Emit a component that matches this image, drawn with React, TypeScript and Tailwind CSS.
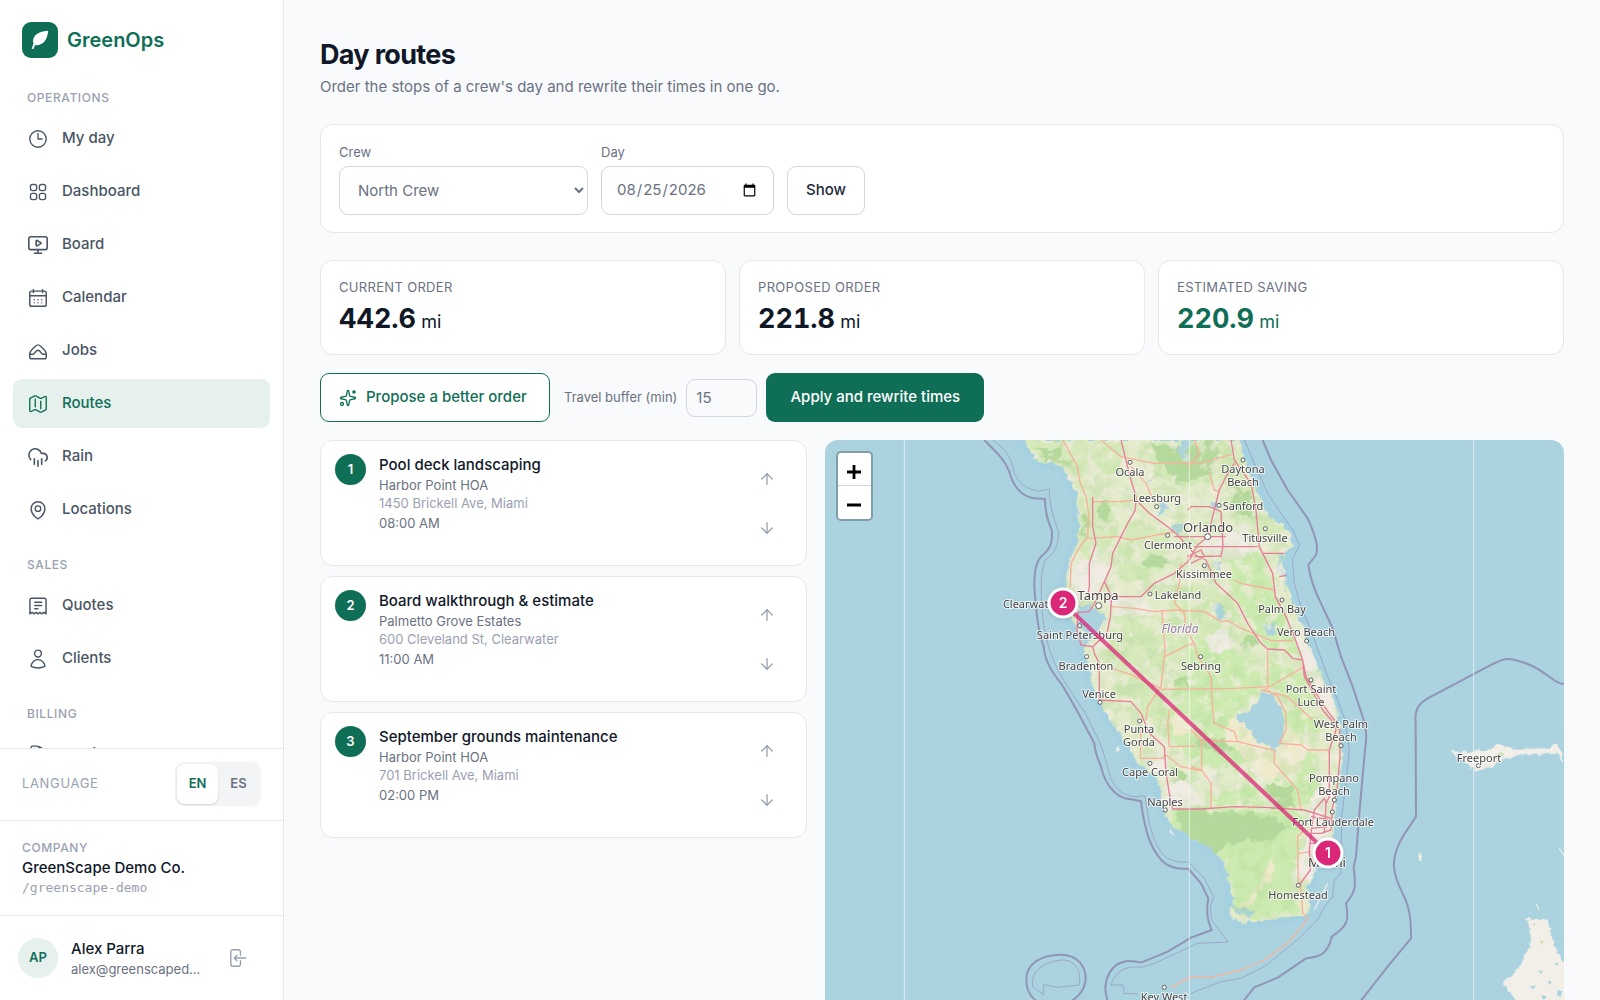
import type { ReactNode } from 'react'
import { ArrowDown, ArrowUp, CloudRain, MonitorPlay, Sparkles } from 'lucide-react'
import {
  HiOutlineArrowLeftOnRectangle,
  HiOutlineClock,
  HiOutlineDocumentText,
  HiOutlineMap,
  HiOutlineMapPin,
  HiOutlineSquares2X2,
  HiOutlineUser,
} from 'react-icons/hi2'

const iconClass = 'h-[22px] w-[22px] shrink-0'

function StrokeIcon({ children }: { children: ReactNode }) {
  return (
    <svg
      viewBox="0 0 24 24"
      fill="none"
      stroke="currentColor"
      strokeWidth="1.6"
      strokeLinecap="round"
      strokeLinejoin="round"
      className={iconClass}
      aria-hidden="true"
    >
      {children}
    </svg>
  )
}

function CalendarIcon() {
  return (
    <StrokeIcon>
      <rect x="3" y="4.5" width="18" height="16.5" rx="2" />
      <path d="M3 9.5h18M7 3v3M17 3v3" />
      <path d="M8 14h.01M12 14h.01M16 14h.01M8 17.3h.01M12 17.3h.01M16 17.3h.01" />
    </StrokeIcon>
  )
}

function JobsIcon() {
  return (
    <StrokeIcon>
      <path d="M3 15.500c0-3.800 3.200-6 5.800-8.400C10 6 10.900 5.300 12 5.300s2 .7 3.200 1.800C17.800 9.500 21 11.700 21 15.500v3a2 2 0 0 1-2 2H5a2 2 0 0 1-2-2Z" />
      <path d="M3 15.500h3.700c2.300 0 2.400-4.300 5.300-4.300s3 4.300 5.300 4.300H21" />
    </StrokeIcon>
  )
}

function QuoteIcon() {
  return (
    <StrokeIcon>
      <path d="M3.200 20.500V5.200a1.700 1.700 0 0 1 1.700-1.700h14.200a1.700 1.700 0 0 1 1.700 1.700v15.300L18.300 19l-2.100 1.500-2.100-1.500-2.100 1.500L9.900 19l-2.100 1.500L5.700 19Z" />
      <path d="M8.500 8H16M8.500 11.500H16M8.500 15H12" />
    </StrokeIcon>
  )
}

type NavItem = { label: string; icon: ReactNode; active?: boolean }

const sections: { title: string; items: NavItem[] }[] = [
  {
    title: 'Operations',
    items: [
      { label: 'My day', icon: <HiOutlineClock className={iconClass} /> },
      { label: 'Dashboard', icon: <HiOutlineSquares2X2 className={iconClass} /> },
      { label: 'Board', icon: <MonitorPlay strokeWidth={1.75} className={iconClass} /> },
      { label: 'Calendar', icon: <CalendarIcon /> },
      { label: 'Jobs', icon: <JobsIcon /> },
      { label: 'Routes', icon: <HiOutlineMap className={iconClass} />, active: true },
      { label: 'Rain', icon: <CloudRain strokeWidth={1.75} className={iconClass} /> },
      { label: 'Locations', icon: <HiOutlineMapPin className={iconClass} /> },
    ],
  },
  {
    title: 'Sales',
    items: [
      { label: 'Quotes', icon: <QuoteIcon /> },
      { label: 'Clients', icon: <HiOutlineUser className={iconClass} /> },
    ],
  },
  {
    title: 'Billing',
    items: [{ label: 'Invoices', icon: <HiOutlineDocumentText className={iconClass} /> }],
  },
]

function Sidebar() {
  return (
    <aside className="flex h-screen w-[284px] shrink-0 flex-col border-r border-gray-200 bg-white">
      <a href="#home" className="flex items-center gap-[9px] px-[22px] pt-[22px] pb-4">
        <svg viewBox="0 0 36 36" className="h-9 w-9" aria-hidden="true">
          <rect width="36" height="36" rx="9" fill="#0f6e56" />
          <path
            d="M26.200 8.800C20.500 9 15 11 12.500 14.500c-1.600 2.300-1.700 4.800-1 7L9.600 27h1.800l1.500-3.800c4.200.4 7.800-1.200 10.100-4.400C25 16 25.900 12.500 26.200 8.800Z"
            fill="#fff"
          />
        </svg>
        <span className="text-xl font-semibold text-[#0f6e56]">GreenOps</span>
      </a>

      <nav className="min-h-0 flex-1 overflow-hidden px-[13px]">
        {sections.map((section) => (
          <div key={section.title} className="pt-[14px] pb-[9px] first:pt-4">
            <h2 className="mb-2 px-[14px] text-[12px] leading-4 font-medium tracking-wider text-gray-400 uppercase">
              {section.title}
            </h2>
            <ul className="flex flex-col gap-1">
              {section.items.map((item) => (
                <li key={item.label}>
                  <a
                    href={`#${item.label.toLowerCase().replace(' ', '-')}`}
                    aria-current={item.active ? 'page' : undefined}
                    className={
                      item.active
                        ? 'flex h-[49px] items-center gap-[13px] rounded-[9px] bg-[#e6f1ee] px-[14px] text-[15px] font-medium text-[#0f6e56]'
                        : 'flex h-[49px] items-center gap-[13px] rounded-[9px] px-[14px] text-[15px] font-medium text-gray-600'
                    }
                  >
                    {item.icon}
                    {item.label}
                  </a>
                </li>
              ))}
            </ul>
          </div>
        ))}
      </nav>

      <div className="flex items-center justify-between border-t border-gray-200 px-[22px] pt-[13px] pb-[14px]">
        <span className="text-[13px] tracking-wider text-gray-400 uppercase">Language</span>
        <div className="flex rounded-[9px] bg-gray-100 p-[2px]">
          <button
            type="button"
            aria-pressed="true"
            className="h-10 w-[41px] rounded-[8px] bg-white text-[13px] font-semibold text-[#0f6e56] shadow-sm"
          >
            EN
          </button>
          <button
            type="button"
            aria-pressed="false"
            className="h-10 w-[41px] rounded-[8px] text-[13px] font-semibold text-gray-500"
          >
            ES
          </button>
        </div>
      </div>

      <div className="border-t border-gray-200 px-[22px] py-[18px]">
        <p className="text-[12px] leading-[18px] font-medium tracking-wider text-gray-400 uppercase">Company</p>
        <p className="text-[15px] leading-[22px] font-medium text-gray-900">GreenScape Demo Co.</p>
        <p className="font-['DejaVu_Sans_Mono',monospace] text-[13px] leading-[18px] text-gray-400">
          /greenscape-demo
        </p>
      </div>

      <div className="flex items-center gap-[13px] border-t border-gray-200 py-[22px] pr-[35px] pl-[18px]">
        <span className="flex h-10 w-10 shrink-0 items-center justify-center rounded-full bg-[#e6f1ee] text-[13px] font-semibold text-[#0f6e56]">
          AP
        </span>
        <div className="w-[132px]">
          <p className="text-[15px] leading-[22px] font-medium text-gray-900">Alex Parra</p>
          <p className="truncate text-[13px] leading-[18px] text-gray-500">alex@greenscapedemo.com</p>
        </div>
        <button type="button" aria-label="Sign out" className="ml-auto text-gray-400">
          <HiOutlineArrowLeftOnRectangle className={iconClass} />
        </button>
      </div>
    </aside>
  )
}

const stats = [
  { label: 'Current order', value: '442.6', color: 'text-gray-900' },
  { label: 'Proposed order', value: '221.8', color: 'text-gray-900' },
  { label: 'Estimated saving', value: '220.9', color: 'text-[#0f6e56]' },
]

const stops = [
  { title: 'Pool deck landscaping', client: 'Harbor Point HOA', address: '1450 Brickell Ave, Miami', time: '08:00 AM' },
  {
    title: 'Board walkthrough & estimate',
    client: 'Palmetto Grove Estates',
    address: '600 Cleveland St, Clearwater',
    time: '11:00 AM',
  },
  {
    title: 'September grounds maintenance',
    client: 'Harbor Point HOA',
    address: '701 Brickell Ave, Miami',
    time: '02:00 PM',
  },
]

function StopCard({ stop, index }: { stop: (typeof stops)[number]; index: number }) {
  return (
    <li className="flex items-start gap-[13px] rounded-[13px] border border-gray-200 bg-white px-[14px] py-[13px]">
      <span className="flex h-[31px] w-[31px] shrink-0 items-center justify-center rounded-full bg-[#0f6e56] text-[13px] font-semibold text-white">
        {index + 1}
      </span>
      <div className="min-w-0 flex-1 text-[13px] leading-[18px]">
        <h3 className="text-[15px] leading-[22px] font-medium text-gray-900">{stop.title}</h3>
        <p className="text-gray-500">{stop.client}</p>
        <p className="text-gray-400">{stop.address}</p>
        <p className="mt-[2px] text-gray-500">{stop.time}</p>
      </div>
      <div className="flex flex-col text-gray-400">
        <button
          type="button"
          aria-label={`Move ${stop.title} up`}
          className="flex h-[49px] w-[49px] items-center justify-center"
        >
          <ArrowUp size={18} strokeWidth={1.75} />
        </button>
        <button
          type="button"
          aria-label={`Move ${stop.title} down`}
          className="flex h-[49px] w-[49px] items-center justify-center"
        >
          <ArrowDown size={18} strokeWidth={1.75} />
        </button>
      </div>
    </li>
  )
}

// Geography is drawn on a grid three times finer than the labels.
const land =
  'M608 30 630 70 655 95 690 100 725 110 745 150 765 190 772 240 775 290 770 330 755 370 742 410 735 440 738 470 745 500 750 560 765 590 780 610 790 640 785 655 800 700 810 750 830 800 850 840 870 870 890 900 925 945 945 1000 975 1020 1005 1040 1018 1070 1022 1110 1035 1160 1060 1190 1100 1215 1140 1240 1185 1270 1210 1300 1220 1340 1230 1380 1240 1410 1226 1440 1235 1465 1260 1480 1310 1472 1360 1465 1410 1460 1450 1455 1470 1440 1465 1400 1460 1370 1475 1340 1485 1310 1515 1290 1535 1260 1538 1200 1545 1120 1555 1060 1562 1000 1562 950 1557 890 1550 850 1535 800 1510 750 1485 695 1460 640 1445 590 1430 550 1410 500 1392 450 1385 400 1390 370 1412 350 1405 310 1380 280 1345 260 1330 235 1312 190 1290 140 1272 90 1255 30Z'

const areas: { fill: string; paths: string[] }[] = [
  {
    fill: '#d6e9ba',
    paths: [
      'M612 30 800 30 800 110 780 200 770 150 740 105 660 92Z',
      'M830 30 905 30 900 110 850 130 820 90Z',
      'M960 30 1230 30 1235 130 1170 160 1090 170 1000 130Z',
      'M780 210 860 200 900 260 870 350 800 400 775 330Z',
      'M930 270 1030 300 1060 400 990 450 890 450 890 350Z',
      'M1200 130 1290 160 1320 260 1380 290 1390 330 1250 290 1210 220Z',
      'M880 550 1030 560 1030 700 960 780 880 720 860 620Z',
      'M1060 440 1200 470 1280 590 1310 700 1300 780 1200 790 1060 740 1030 600Z',
      'M870 720 1100 800 1110 960 1040 940 980 870 900 830Z',
      'M1230 40 1280 60 1310 180 1280 170 1240 110Z',
    ],
  },
  {
    fill: '#cdebb0',
    paths: [
      'M1215 390 1300 380 1350 440 1360 500 1400 570 1430 650 1420 680 1340 655 1290 580 1240 500Z',
      'M1120 620 1220 650 1320 720 1320 780 1210 850 1130 850 1060 780Z',
      'M1040 840 1180 800 1260 860 1330 960 1230 1020 1130 1000 1050 930Z',
      'M1370 850 1440 830 1500 870 1500 910 1430 910Z',
      'M1440 970 1490 960 1490 1070 1450 1130 1390 1120 1370 1030 1440 1030Z',
      'M1160 1090 1300 1080 1340 1120 1200 1130Z',
      'M1340 690 1440 720 1500 830 1430 830 1380 790 1340 760Z',
      'M1050 1140 1160 1138 1440 1140 1440 1210 1425 1300 1410 1370 1430 1440 1300 1465 1240 1450 1230 1380 1210 1290 1130 1235 1060 1185Z',
    ],
  },
  {
    fill: '#b5d99c',
    paths: [
      'M990 40 1100 50 1180 30 1200 120 1120 140 1070 170 1030 120Z',
      'M640 50 700 60 760 100 730 105 660 90Z',
      'M830 225 860 220 865 280 830 290Z',
      'M778 240 798 250 795 330 778 320Z',
      'M960 380 1020 375 1050 400 1000 425Z',
      'M1230 180 1290 180 1300 270 1240 260Z',
      'M1330 1075 1410 1075 1440 1135 1350 1130Z',
      'M1060 1140 1200 1145 1370 1160 1400 1190 1330 1240 1240 1240 1180 1270 1090 1210Z',
      'M1065 750 1100 745 1105 775 1065 775Z',
      'M1130 930 1210 930 1240 960 1180 985Z',
      'M1060 1010 1100 1030 1090 1080 1050 1070Z',
      'M1270 600 1310 615 1300 650 1260 640Z',
    ],
  },
  {
    fill: '#eeeacb',
    paths: [
      'M1250 850 1370 930 1370 880 1470 940 1440 980 1430 1030 1365 1040 1330 1040 1210 920Z',
      'M1050 860 1110 850 1120 900 1060 920Z',
      'M1340 1290 1365 1270 1360 1330 1320 1390 1280 1440 1260 1430 1320 1350Z',
    ],
  },
  {
    fill: '#f0ece4',
    paths: [
      'M1165 600 1210 595 1230 630 1215 665 1180 660 1162 635Z',
      'M1160 310 1290 300 1310 350 1290 380 1180 385 1140 350Z',
      'M770 400 830 370 860 420 830 500 760 500 745 440Z',
      'M1150 1020 1190 1015 1190 1060 1150 1060Z',
      'M1500 1040 1545 1040 1530 1260 1480 1310 1430 1370 1420 1290 1460 1240 1460 1130Z',
      'M1025 1060 1130 1060 1130 1130 1040 1150Z',
      'M850 500 960 500 1000 550 880 560Z',
      'M960 1000 1030 950 1040 1050Z',
      'M1420 600 1450 610 1490 720 1550 860 1510 840 1450 720Z',
    ],
  },
  {
    fill: '#aad3df',
    paths: [
      'M1320 782 1350 790 1375 820 1392 860 1390 890 1380 930 1362 955 1335 945 1300 930 1290 900 1270 885 1250 862 1285 845 1310 810Z',
      'M772 530 805 522 830 545 852 550 850 575 835 590 830 610 812 625 795 645 775 635 790 600 775 575Z',
      'M1070 40 1100 40 1110 90 1085 85Z',
      'M1010 220 1040 230 1030 250 1010 245Z',
      'M1060 280 1090 285 1080 310 1055 300Z',
      'M1175 520 1200 515 1220 560 1200 575 1180 550Z',
      'M1175 390 1200 395 1195 420 1178 415Z',
      'M1335 575 1360 575 1355 620 1335 605Z',
      'M1365 360 1390 370 1385 440 1400 500 1375 430Z',
      'M1180 210 1200 215 1195 240 1180 235Z',
      'M1225 1410 1260 1430 1300 1440 1290 1465 1250 1450Z',
      'M985 145 995 145 995 160 980 160Z',
    ],
  },
]

const highways = [
  'M900 30 912 80 930 150 945 200 943 240 920 280 900 320 875 370 870 410 850 455 872 500 868 560 858 610 815 650 820 670 835 700 835 810 930 815 960 850 968 870 985 910 1030 950 1035 1030 1050 1120 1055 1137 1140 1137 1240 1130 1330 1132 1450 1140 1530 1165',
  'M945 210 985 250 1040 290 1070 315 1100 350 1130 380 1155 390 1185 460 1250 520 1280 580 1320 640 1340 657 1390 660 1415 685 1445 690 1455 740 1510 830 1540 870 1545 900 1525 960 1525 1100 1515 1120',
  'M1230 30 1240 90 1290 160 1305 240 1315 350 1355 430 1363 500 1395 560 1420 620 1445 690 1450 740 1505 840 1556 900 1557 980 1548 1080 1535 1130 1530 1200 1500 1210 1470 1210 1465 1260 1468 1320 1435 1365',
  'M872 500 960 500 1000 460 1060 430 1100 395 1130 345 1160 320 1180 240 1195 180 1215 140 1240 100',
  'M815 200 815 290 825 340 805 400 805 470 800 500M833 500 805 545 770 548 768 600 780 645 815 650M850 455 830 500',
  'M1060 320 1215 320M1120 350 1310 350M1325 370 1390 370M1375 440 1397 436M1110 230 1165 230 1200 245 1206 350 1200 378 1120 380M1100 240 1110 230',
  'M1100 395 1115 375M1098 380 1140 360 1150 380 1110 400',
  'M1470 1210 1480 1140 1510 1105 1515 1120 1510 1210M1465 1240 1500 1240M1470 1160 1530 1170M1472 1195 1520 1190',
]

const roads = [
  'M725 30 770 110 775 150 795 200 803 250 800 320 770 360 750 400 748 470',
  'M800 325 890 320 930 330 1060 305M840 30 900 80 1000 100 1140 100 1232 73M815 215 900 215 940 210',
  'M872 530 940 535 1000 545 1060 540 1150 545 1200 575 1220 572 1250 590 1320 620 1350 632 1415 632',
  'M1023 540 1032 660 1020 770 980 830 975 870M1020 778 1240 775 1340 770 1340 660',
  'M868 715 920 730 1020 775M1032 680 1090 650 1120 640M1080 400 1075 460 1060 520 1090 550 1095 600 1120 640 1130 680 1170 740 1175 840 1180 880 1240 905 1250 935',
  'M1240 450 1260 460 1360 480M1330 780 1380 750 1450 710M1320 780 1400 800 1475 870M1340 780 1370 800 1395 850 1395 900 1375 940 1440 945 1460 960 1525 960',
  'M1360 960 1360 1000 1430 1080 1440 1140M1110 900 1140 930 1250 935 1360 962M1142 930 1142 1020 1170 1060 1170 1137',
  'M1045 840 1040 880 1045 950 1125 948M960 900 958 985 1025 985 1035 975 1080 1010 1140 1022M1140 1020 1110 1010',
  'M1432 1366 1430 1220 1450 1200M1432 1270 1470 1265M1440 1370 1445 1450 1462 1465 1400 1540 1330 1590 1260 1620 1180 1640 1110 1640 1050 1672',
  'M1120 30 1135 70 1100 110M1165 130 1180 180 1195 185M930 110 975 160 1000 220',
]

const boundaries = [
  'M490 30C520 62 550 85 565 125 575 165 600 200 640 205L672 207C672 250 682 275 692 300 697 340 685 360 660 380 640 405 640 440 640 470 645 540 650 600 668 650 672 700 700 735 720 760 745 800 760 830 770 845L820 940C822 970 832 990 840 1010 855 1080 900 1108 930 1108L960 1114C965 1160 975 1200 985 1230 1015 1300 1045 1320 1102 1316L1140 1360 1162 1405C1155 1440 1158 1470 1172 1500L1110 1523 1040 1565 960 1598C900 1580 860 1610 853 1670 852 1700 865 1730 875 1740',
  'M1325 30 1350 90 1400 180 1460 265C1480 310 1495 350 1485 375L1462 405C1468 450 1480 480 1500 520L1535 595 1560 680 1595 770 1625 860C1640 900 1636 930 1632 960L1615 1150 1605 1280 1598 1310C1605 1370 1605 1385 1575 1420 1585 1470 1580 1490 1532 1520 1520 1580 1485 1582 1455 1585L1370 1643 1300 1672 1270 1710 1230 1740',
  'M2236 762C2200 765 2180 725 2120 702 2060 680 2050 683 2010 705L1830 800C1790 820 1780 840 1784 880L1785 1160 1745 1220C1705 1290 1715 1330 1745 1390 1770 1440 1770 1480 1770 1525L1700 1610 1590 1750',
  'M616 1650C616 1600 660 1574 720 1574 770 1574 794 1610 794 1645 794 1690 750 1725 700 1730 650 1725 616 1700 616 1650Z',
]

const innerBoundaries = [
  'M515 30C560 60 570 90 575 110 585 160 620 180 655 183L685 178C685 230 700 270 713 305 712 350 700 370 675 388 655 420 660 500 665 560 675 640 690 690 740 770L790 845 838 940 860 1010C870 1070 900 1095 940 1100L972 1098 985 1180C1010 1270 1030 1300 1102 1296L1150 1345 1178 1400 1168 1430 1172 1470 1221 1536 1130 1540 1000 1600 960 1612C910 1605 880 1630 870 1665L905 1665 910 1690 950 1692',
  'M1270 30 1300 100 1340 190 1380 250 1415 300 1436 345 1414 390 1420 460 1440 530 1470 600 1495 670 1520 740 1550 810 1572 870 1585 960 1575 1060 1562 1160 1560 1330 1540 1350 1535 1400 1510 1430 1490 1470 1440 1520 1380 1570 1330 1610 1260 1645 1200 1655 1110 1690',
  'M668 1695 635 1670C625 1620 680 1590 730 1590 770 1595 780 1630 775 1665L710 1672 668 1664Z',
]

const islands = [
  'M1885 955 1915 968 2005 960 2030 943 2070 958 2110 958 2190 952 2210 935 2216 958 2232 995 2205 972 2110 975 2050 985 2010 1010 1970 1024 1940 1005 1900 970Z',
  'M2115 1463 2150 1470 2180 1468 2190 1520 2210 1570 2236 1600 2236 1730 2100 1730 2045 1660 2095 1615 2110 1580 2135 1530 2125 1490Z',
  'M890 945 895 960 888 965ZM1045 1195 1058 1215 1050 1215ZM1798 1270 1808 1275 1800 1290 1790 1288Z',
]

const towns = [
  [927, 97], [1007, 230], [1040, 316], [1150, 407], [987, 492], [776, 587], [797, 680], [837, 817], [1139, 680],
  [1266, 90], [1194, 226], [1333, 296], [1383, 510], [1457, 633], [1470, 750], [1560, 947], [956, 873],
  [987, 1000], [1033, 1140], [1540, 1110], [1534, 1146], [1432, 1366], [1972, 1007], [1030, 1672],
]

const labels: [string, number, number][] = [
  ['Ocala', 305, 36], ['Leesburg', 332, 62], ['Clermont', 343, 109], ['Kissimmee', 379, 138],
  ['Lakeland', 353, 159], ['Clearwater', 206, 168], ['Saint Petersburg', 255, 199], ['Bradenton', 261, 230],
  ['Venice', 274, 258], ['Sebring', 376, 230], ['Daytona', 418, 33], ['Beach', 418, 46], ['Sanford', 418, 70],
  ['Titusville', 440, 102], ['Palm Bay', 457, 173], ['Vero Beach', 481, 196], ['Port Saint', 486, 253],
  ['Lucie', 486, 266], ['West Palm', 516, 288], ['Beach', 516, 301], ['Punta', 314, 293], ['Gorda', 314, 306],
  ['Cape Coral', 325, 336], ['Naples', 340, 366], ['Pompano', 509, 342], ['Beach', 509, 355],
  ['Fort Lauderdale', 508, 386], ['Homestead', 473, 459], ['Freeport', 654, 322], ['Key West', 339, 561],
]

const cities: [string, number, number][] = [
  ['Orlando', 383, 92],
  ['Tampa', 273, 160],
  ['Miami', 502, 427],
]

const pins = [
  { label: '2', x: 238, y: 163 },
  { label: '1', x: 503, y: 413 },
]

function RouteMap() {
  return (
    <section
      aria-label="Route map"
      className="relative col-span-3 h-[578px] overflow-hidden rounded-[13px] bg-[#aad3df]"
    >
      <svg
        viewBox="0 0 740 578"
        preserveAspectRatio="xMinYMin slice"
        className="h-full w-full font-['Noto_Sans',sans-serif]"
        aria-hidden="true"
      >
        <defs>
          <clipPath id="shore">
            <path d={land} />
          </clipPath>
          <filter id="rough" x="0" y="0" width="100%" height="100%" colorInterpolationFilters="sRGB">
            <feTurbulence type="fractalNoise" baseFrequency="0.02" numOctaves="3" seed="4" result="noise" />
            <feDisplacementMap in="SourceGraphic" in2="noise" scale="50" xChannelSelector="R" yChannelSelector="G" />
          </filter>
          <filter id="coast" x="0" y="0" width="100%" height="100%" colorInterpolationFilters="sRGB">
            <feTurbulence type="fractalNoise" baseFrequency="0.05" numOctaves="2" seed="7" result="noise" />
            <feDisplacementMap in="SourceGraphic" in2="noise" scale="20" xChannelSelector="R" yChannelSelector="G" />
          </filter>
          <filter id="speckle" x="0" y="0" width="100%" height="100%" colorInterpolationFilters="sRGB">
            <feTurbulence type="fractalNoise" baseFrequency="0.02" numOctaves="4" seed="9" />
            <feColorMatrix values="0 0 0 0 .7  0 0 0 0 .86  0 0 0 0 .6  0 5 0 0 -2.4" />
          </filter>
          <filter id="fields" x="0" y="0" width="100%" height="100%" colorInterpolationFilters="sRGB">
            <feTurbulence type="fractalNoise" baseFrequency="0.03" numOctaves="3" seed="23" />
            <feColorMatrix values="0 0 0 0 .95  0 0 0 0 .93  0 0 0 0 .88  7 0 0 0 -3.8" />
          </filter>
        </defs>
        <g transform="translate(-4 -10) scale(.33333)" fill="none" strokeLinejoin="round">
          <path d={land} fill="none" stroke="#9fcfe2" strokeWidth="40" opacity=".35" />
          <g filter="url(#coast)">
            <path d={land} fill="#e3ebcb" />
            <g clipPath="url(#shore)">
              <g filter="url(#rough)">
                {areas.map((area) => (
                  <path key={area.fill} d={area.paths.join('')} fill={area.fill} />
                ))}
              </g>
              <rect x="600" y="20" width="1000" height="1500" filter="url(#speckle)" opacity=".35" />
              <rect x="600" y="20" width="1000" height="1110" filter="url(#fields)" opacity=".6" />
              <path d={areas[5].paths[0] + areas[5].paths[1]} fill="#aad3df" />
            </g>
            {islands.map((d) => (
              <path key={d} d={d} fill="#f2efe9" />
            ))}
          </g>
          <path d="M2010 985 2040 965 2050 975 2020 990ZM2155 1530l12 4-4 10ZM2135 1480l8 2-4 6Z" fill="#c8dfb0" />
          <path
            d="M2150 1620l14 4-4 8ZM2180 1650l12 6-6 10ZM2125 1670l20-4-8 12ZM2160 1695l18 4-10 12ZM2200 1600l12-2-4 10ZM2210 1680l14 4-6 18-10-8Z"
            fill="#aad3df"
          />
          <path d="M1480 1440 1500 1400 1520 1360M2145 1420 2155 1440M2215 1255 2235 1285" stroke="#e8ece6" strokeWidth="4" />
          <path d={roads.join('')} stroke="#f8b19b" strokeWidth="4" />
          <path d={highways.join('')} stroke="#e77f97" strokeWidth="4" />
          <path d={innerBoundaries.join('')} stroke="#8a7fae" strokeWidth="3" opacity=".5" />
          <path d={boundaries.join('')} stroke="#8a7fa8" strokeWidth="6" opacity=".75" />
          <path d="M250 30V1770M1105 30V1770M1958 30V1770" stroke="#fff" strokeWidth="3" opacity=".6" />
          <g fill="#fff" stroke="#5c5c5c" strokeWidth="3">
            {towns.map(([x, y]) => (
              <circle key={`${x}-${y}`} cx={x} cy={y} r="6" />
            ))}
            <circle cx="1160" cy="320" r="9" />
            <circle cx="833" cy="527" r="9" />
          </g>
        </g>
        <g textAnchor="middle" fill="#444" stroke="#fff" strokeOpacity=".75" strokeWidth="2" strokeLinejoin="round" paintOrder="stroke">
          <g fontSize="11">
            {labels.map(([name, x, y]) => (
              <text key={`${name}-${x}`} x={x} y={y}>
                {name}
              </text>
            ))}
            <text x="355" y="193" fill="#9a7aa8" fontSize="12" fontStyle="italic">
              Florida
            </text>
          </g>
          <g fontSize="13">
            {cities.map(([name, x, y]) => (
              <text key={name} x={x} y={y}>
                {name}
              </text>
            ))}
          </g>
        </g>
        <path d="M238 163 503 413" stroke="#db2777" strokeWidth="4" strokeLinecap="round" opacity=".75" />
        {pins.map((pin) => (
          <g key={pin.label} textAnchor="middle" className="drop-shadow">
            <circle cx={pin.x} cy={pin.y} r="14" fill="#db2777" stroke="#fff" strokeWidth="3" />
            <text x={pin.x} y={pin.y + 5} fill="#fff" fontSize="14" fontWeight="600" className="font-['Inter',sans-serif]">
              {pin.label}
            </text>
          </g>
        ))}
      </svg>

      <div className="absolute top-[11px] left-[11px] flex flex-col rounded-[5px] border-2 border-black/25 bg-clip-padding">
        <button type="button" aria-label="Zoom in" className="flex h-[33px] w-[33px] items-center justify-center rounded-t-[3px] border-b border-gray-300 bg-white pt-[5px]">
          <svg viewBox="0 0 16 16" className="h-4 w-4" aria-hidden="true">
            <path d="M8 1v14M1 8h14" stroke="#000" strokeWidth="2.800" />
          </svg>
        </button>
        <button type="button" aria-label="Zoom out" className="flex h-[33px] w-[33px] items-center justify-center rounded-b-[3px] bg-white pt-[5px]">
          <svg viewBox="0 0 16 16" className="h-4 w-4" aria-hidden="true">
            <path d="M1 8h14" stroke="#000" strokeWidth="2.800" />
          </svg>
        </button>
      </div>
    </section>
  )
}

export default function App() {
  return (
    <div className="flex h-screen overflow-hidden bg-[#f9fafc] font-['Inter',sans-serif] text-gray-900">
      <Sidebar />
      <main className="min-w-0 flex-1 overflow-hidden px-9 pt-[37px]">
        <h1 className="text-[27px] leading-9 font-bold tracking-tight">Day routes</h1>
        <p className="mt-[2px] text-[15px] leading-6 text-gray-500">
          Order the stops of a crew's day and rewrite their times in one go.
        </p>

        <form
          className="mt-[25px] flex items-end gap-[13px] rounded-[13px] border border-gray-200 bg-white px-[18px] pt-[18px] pb-[17px]"
          onSubmit={(e) => e.preventDefault()}
        >
          <div className="flex flex-col gap-[5px]">
            <label htmlFor="crew" className="text-[13px] leading-[18px] text-gray-500">
              Crew
            </label>
            <select
              id="crew"
              className="h-[49px] w-[249px] rounded-[9px] border border-gray-300 bg-white px-[14px] text-[15px] text-gray-500"
            >
              <option>North Crew</option>
            </select>
          </div>
          <div className="flex flex-col gap-[5px]">
            <label htmlFor="day" className="text-[13px] leading-[18px] text-gray-500">
              Day
            </label>
            <input
              id="day"
              type="date"
              defaultValue="2026-08-25"
              className="h-[49px] w-[173px] rounded-[9px] border border-gray-300 bg-white px-[14px] text-[15px] text-gray-500"
            />
          </div>
          <button
            type="submit"
            className="h-[49px] rounded-[9px] border border-gray-300 bg-white px-[18px] text-[15px] font-medium text-gray-800"
          >
            Show
          </button>
        </form>

        <dl className="mt-[27px] grid grid-cols-3 gap-[13px]">
          {stats.map((stat) => (
            <div key={stat.label} className="rounded-[13px] border border-gray-200 bg-white px-[18px] pt-4 pb-[17px]">
              <dt className="text-[13px] leading-5 tracking-wide text-gray-500 uppercase">{stat.label}</dt>
              <dd className={`mt-1 text-[27px] leading-9 font-bold tabular-nums ${stat.color}`}>
                {stat.value} <span className="-ml-[2px] text-lg font-normal">mi</span>
              </dd>
            </div>
          ))}
        </dl>

        <div className="mt-[18px] flex items-center gap-[9px]">
          <button
            type="button"
            className="flex h-[49px] w-[230px] items-center gap-[9px] rounded-[9px] border border-[#0f6e56] bg-white px-[18px] text-[15px] font-medium text-[#0f6e56]"
          >
            <Sparkles size={18} strokeWidth={1.75} />
            Propose a better order
          </button>
          <label htmlFor="buffer" className="ml-[5px] text-[13px] text-gray-500">
            Travel buffer (min)
          </label>
          <input
            id="buffer"
            type="text"
            inputMode="numeric"
            defaultValue="15"
            className="h-[38px] w-[71px] rounded-[9px] border border-gray-300 bg-transparent px-[9px] text-[15px] text-gray-500"
          />
          <button
            type="button"
            className="h-[49px] w-[218px] rounded-[9px] bg-[#0f6e56] text-[15px] font-medium text-white"
          >
            Apply and rewrite times
          </button>
        </div>

        <div className="mt-[18px] grid grid-cols-5 items-start gap-[18px]">
          <ol className="col-span-2 flex flex-col gap-[10px]">
            {stops.map((stop, index) => (
              <StopCard key={stop.title} stop={stop} index={index} />
            ))}
          </ol>
          <RouteMap />
        </div>
      </main>
    </div>
  )
}
